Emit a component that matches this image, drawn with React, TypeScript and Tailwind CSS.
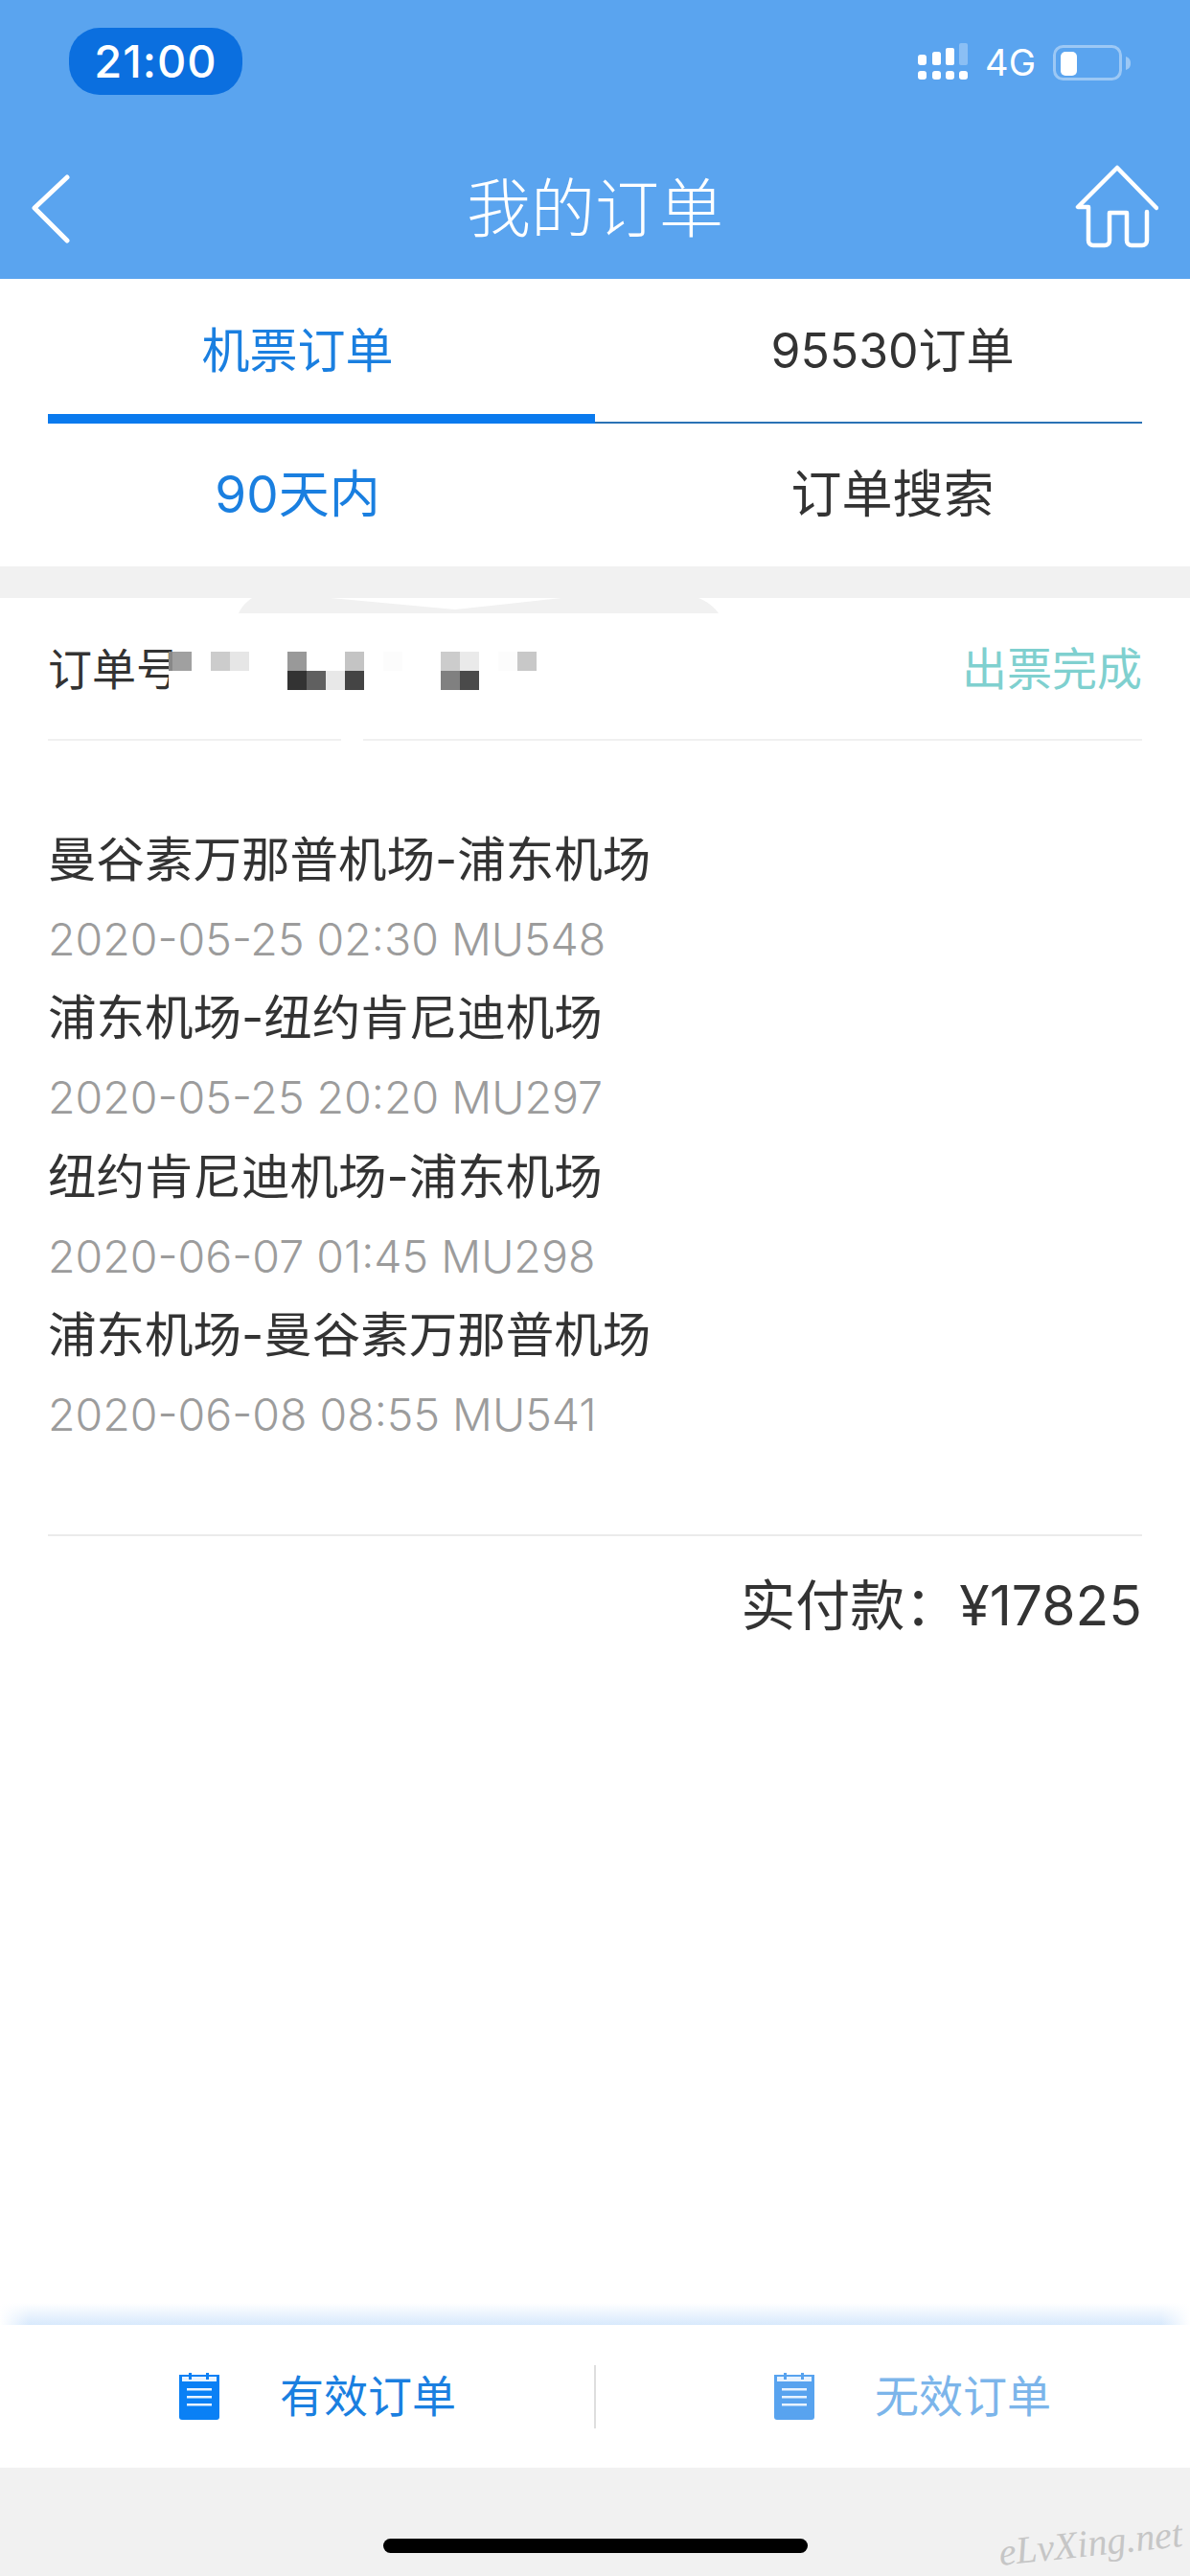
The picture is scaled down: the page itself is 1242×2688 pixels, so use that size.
const FONT = "font-['Inter','Noto_Sans_CJK_SC',sans-serif]";

const trips = [
  ["曼谷素万那普机场-浦东机场", "2020-05-25 02:30 MU548"],
  ["浦东机场-纽约肯尼迪机场", "2020-05-25 20:20 MU297"],
  ["纽约肯尼迪机场-浦东机场", "2020-06-07 01:45 MU298"],
  ["浦东机场-曼谷素万那普机场", "2020-06-08 08:55 MU541"],
];

const mosaicTop = [
  "bg-[#a0a0a0]", "bg-white", "bg-[#cccccc]", "bg-[#e6e6e6]", "bg-white", "bg-white", "bg-[#999999]", "bg-white", "bg-white", "bg-[#c4c4c4]",
  "bg-white", "bg-[#fcfcfc]", "bg-white", "bg-white", "bg-[#cccccc]", "bg-[#eaeaea]", "bg-white", "bg-[#fcfcfc]", "bg-[#c8c8c8]",
];
const mosaicBottom = [
  "bg-white", "bg-white", "bg-white", "bg-white", "bg-white", "bg-white", "bg-[#333333]", "bg-[#606060]", "bg-[#e8e8e8]", "bg-[#444444]",
  "bg-white", "bg-white", "bg-white", "bg-white", "bg-[#808080]", "bg-[#4a4a4a]", "bg-white", "bg-white", "bg-white",
];

function Signal() {
  return (
    <svg width="52" height="40" viewBox="0 0 52 40" fill="#fff" className="block">
      <rect x="0" y="12" width="9" height="11" rx="3" />
      <rect x="15" y="9" width="9" height="14" rx="2.5" />
      <rect x="29" y="5" width="9" height="18" rx="2" />
      <rect x="43" y="0" width="9" height="23" rx="2" fillOpacity="0.3" />
      <rect x="0" y="29" width="9" height="9" rx="3" />
      <rect x="15" y="29" width="9" height="9" rx="3" />
      <rect x="29" y="29" width="9" height="9" rx="3" />
      <rect x="43" y="29" width="9" height="9" rx="3" />
    </svg>
  );
}

function Battery() {
  return (
    <svg width="82" height="38" viewBox="0 0 82 38" className="block">
      <rect x="1.5" y="1.5" width="69" height="34" rx="9" fill="none" stroke="#fff" strokeOpacity="0.4" strokeWidth="3" />
      <rect x="8" y="7" width="17" height="25" rx="5" fill="#fff" />
      <path d="M76 12c3 1 5 3 5 7s-2 6-5 7z" fill="#fff" fillOpacity="0.4" />
    </svg>
  );
}

function NoteIcon({ color }: { color: string }) {
  return (
    <svg width="42" height="49" viewBox="0 0 42 49" className="block shrink-0">
      <path d="M0 2h42v44a3 3 0 0 1-3 3H3a3 3 0 0 1-3-3z" fill={color} />
      <rect x="3" y="4" width="36" height="5" fill="#e8f3ff" />
      <rect x="10" y="0" width="3" height="7" fill={color} />
      <rect x="28" y="0" width="3" height="7" fill={color} />
      <rect x="4" y="0" width="5" height="2" fill="#fff" />
      <rect x="14" y="0" width="13" height="2" fill="#fff" />
      <rect x="32" y="0" width="6" height="2" fill="#fff" />
      <rect x="8" y="16" width="26" height="2.5" fill="#e8f3ff" />
      <rect x="8" y="24" width="26" height="2.5" fill="#e8f3ff" />
      <rect x="8" y="32" width="26" height="2.5" fill="#e8f3ff" />
    </svg>
  );
}

export default function App() {
  return (
    <div className={`${FONT} relative flex h-[2688px] w-[1242px] flex-col overflow-hidden bg-white text-[#333333]`}>
      <header className="h-[291px] shrink-0 bg-[#5aa4ef] text-white">
        <div className="flex h-[140px] items-start justify-between pl-[72px] pr-[61px] pt-[29px]">
          <div className="flex h-[70px] w-[181px] items-center justify-center rounded-[32px] bg-[#0b6fdf] text-[47px] font-medium tracking-[1px]">
            21:00
          </div>
          <div className="flex items-start pt-[16px]">
            <Signal />
            <span className="ml-[18px] text-[38px] leading-[40px]">4G</span>
            <div className="ml-[18px] pt-[2px]">
              <Battery />
            </div>
          </div>
        </div>
        <div className="grid h-[151px] grid-cols-[1fr_auto_1fr] items-center px-[33px]">
          <svg width="40" height="72" viewBox="0 0 40 72" fill="none" className="mt-[5px] justify-self-start">
            <path d="M37 3 3 35l34 34" stroke="#fff" strokeWidth="5" strokeLinecap="round" strokeLinejoin="round" />
          </svg>
          <div className="mt-[4px] text-[67px] font-light leading-none">我的订单</div>
          <svg width="88" height="88" viewBox="1120 173 88 88" fill="none" className="justify-self-end">
            <path
              d="M1206 218 1165 176 1124 217H1135V252a5 5 0 0 0 5 5H1152a5 5 0 0 0 5-5V223H1175V252a5 5 0 0 0 5 5H1191a5 5 0 0 0 5-5V222"
              stroke="#fff"
              strokeWidth="4.5"
              strokeLinecap="round"
              strokeLinejoin="round"
            />
          </svg>
        </div>
      </header>

      <section className="h-[300px] shrink-0">
        <div className="grid h-[141px] grid-cols-2 pt-[10px] text-[50px] font-normal">
          <div className="flex items-center justify-center text-[#1a7fe0]">机票订单</div>
          <div className="flex items-center justify-center">95530订单</div>
        </div>
        <div className="mx-[50px] flex h-[10px] items-end">
          <div className="h-[10px] flex-1 bg-[#0a7aee]" />
          <div className="h-[2px] flex-1 bg-[#2a72b5]" />
        </div>
        <div className="grid h-[149px] grid-cols-2 text-[53px] font-normal">
          <div className="flex items-center justify-center text-[#1a7fe0]">90天内</div>
          <div className="flex items-center justify-center">订单搜索</div>
        </div>
      </section>

      <div className="h-[33px] shrink-0 bg-[#f1f1f1]" />

      <section className="relative flex flex-1 flex-col px-[50px]">
        <svg width="501" height="16" viewBox="0 0 501 16" className="absolute left-[249px] top-0">
          <path d="M0 16C3 9 8 4 14 0H96L226 12 337 0H480C490 4 496 9 501 16z" fill="#f1f1f1" />
        </svg>
        <div className="relative flex h-[149px] shrink-0 items-center justify-between border-b-2 border-[#f0f0f0] pt-[2px]">
          <span className="text-[46px] font-normal">订单号</span>
          <span className="text-[47px] font-normal text-[#7fd0cf]">出票完成</span>
          <div className="absolute left-[126px] top-[56px] flex h-[40px] w-[384px] flex-col bg-white">
            <div className="flex h-[20px] items-stretch">
              <div className="h-full w-[4px] bg-[#888888]" />
              {mosaicTop.map((c, i) => (
                <div key={i} className={`h-full w-[20px] ${c}`} />
              ))}
            </div>
            <div className="flex h-[20px] pl-[4px]">
              {mosaicBottom.map((c, i) => (
                <div key={i} className={`h-full w-[20px] ${c}`} />
              ))}
            </div>
          </div>
          <div className="absolute -bottom-[2px] left-[306px] h-[2px] w-[23px] bg-white" />
        </div>

        <div className="shrink-0 border-b-2 border-[#ebebeb] pb-[83px] pt-[83px]">
          {trips.map(([route, info]) => (
            <div key={route}>
              <div className="text-[50.5px] font-normal leading-[82.7px]">{route}</div>
              <div className="text-[46.5px] font-light leading-[82.7px] text-[#9c9c9c]">{info}</div>
            </div>
          ))}
        </div>

        <div className="flex h-[146px] shrink-0 items-center justify-end text-[57px] font-normal">实付款：¥17825</div>
      </section>

      <div className="relative h-[23px] shrink-0 bg-linear-to-b from-white to-[#d8e9fc]">
        <div className="absolute inset-y-0 left-0 w-[30px] bg-linear-to-r from-white to-transparent" />
        <div className="absolute inset-y-0 right-0 w-[30px] bg-linear-to-l from-white to-transparent" />
      </div>
      <nav className="grid h-[149px] shrink-0 grid-cols-[1fr_2px_1fr] items-center text-[46px] font-normal">
        <div className="flex items-center gap-[63px] pl-[187px] text-[#1a7fe0]">
          <NoteIcon color="#0a80f5" />
          <span>有效订单</span>
        </div>
        <div className="h-[66px] w-[2px] bg-[#dedede]" />
        <div className="flex items-center gap-[63px] pl-[186px] text-[#7cb5ea]">
          <NoteIcon color="#58a3ef" />
          <span>无效订单</span>
        </div>
      </nav>
      <div className="flex h-[113px] shrink-0 justify-center bg-[#f1f1f1] pt-[74px]">
        <div className="h-[15px] w-[443px] rounded-[8px] bg-black" />
      </div>
      <div className="absolute bottom-[14px] right-[8px] -rotate-6 font-['Liberation_Serif',serif] text-[40px] italic leading-none text-[#c6c6c6]">
        eLvXing.net
      </div>
    </div>
  );
}
